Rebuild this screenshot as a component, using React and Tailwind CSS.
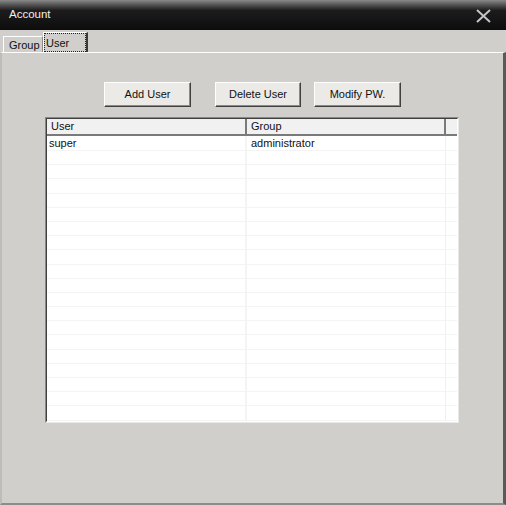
import React from "react";

const rows = Array.from({ length: 20 });

function Btn({ children, className = "" }) {
  return (
    <div
      className={
        "h-[25px] flex items-center justify-center bg-[#ebeae7] border border-t-white border-l-white border-r-[#404040] border-b-[#404040] shadow-[inset_-1px_-1px_0_#8a8a8a] text-[#111] " +
        className
      }
    >
      {children}
    </div>
  );
}

export default function App() {
  return (
    <div
      className="w-[506px] h-[505px] bg-[#d0cfcc] flex flex-col text-[11px] leading-none text-[#111] overflow-hidden"
      style={{ fontFamily: '"Liberation Sans", Arial, sans-serif' }}
    >
      {/* title bar */}
      <div className="h-[30px] shrink-0 flex items-center justify-between pl-[9px] pr-[15px] bg-linear-to-b from-[#8a8a8a] via-[#1c1c1c] via-[35%] to-[#0d0d0d]">
        <span className="text-[#f0f0f0] text-[11.5px] -mt-[1px]">Account</span>
        <svg width="15" height="14" viewBox="0 0 15 14" className="mt-[2px]">
          <path d="M1 1 L14 13 M14 1 L1 13" stroke="#c4c4c4" strokeWidth="2" fill="none" />
        </svg>
      </div>

      {/* tab strip */}
      <div className="h-[22px] shrink-0 flex items-end pl-[3px]">
        <div className="w-[40px] h-[16px] border-l border-t border-white border-r border-r-[#8a8a8a] flex items-center pl-[5px] pt-[2px]">
          Group
        </div>
        <div className="w-[45px] h-[20px] border-l border-t border-white border-r-2 border-r-[#3a3a3a] flex">
          <div className="flex-1 border border-dotted border-[#222] pl-[1px] pt-[4px]">User</div>
        </div>
      </div>

      {/* body */}
      <div className="flex-1 flex flex-col border-t border-t-white border-r-[3px] border-r-[#5a5a5a] border-b-2 border-b-[#8c8c8c] border-l-2 border-l-[#bdbcb8]">
        <div className="flex mt-[29px] pl-[102px]">
          <Btn className="w-[87px]">Add User</Btn>
          <Btn className="w-[86px] ml-[24px]">Delete User</Btn>
          <Btn className="w-[87px] ml-[13px]">Modify PW.</Btn>
        </div>

        {/* list */}
        <div className="ml-[43px] mt-[10px] w-[414px] h-[306px] border border-t-[#888] border-l-[#888] border-r-[#e8e8e8] border-b-[#e8e8e8] flex">
          <div className="flex-1 flex flex-col border border-t-[#404040] border-l-[#404040] border-r-white border-b-white bg-white overflow-hidden">
            {/* header */}
            <div className="h-[17px] shrink-0 flex bg-[#f1f1f1] border-b-2 border-b-[#7a7a7a]">
              <div className="w-[200px] pl-[4px] flex items-center border-r-2 border-r-[#7a7a7a]">User</div>
              <div className="w-[199px] pl-[4px] flex items-center border-r-2 border-r-[#7a7a7a]">Group</div>
              <div className="flex-1" />
            </div>
            {/* rows */}
            <div className="flex-1">
              {rows.map((_, i) => (
                <div
                  key={i}
                  className={
                    "flex border-b border-b-[#f4f4f4] " + (i === 0 ? "h-[15px]" : "h-[14.2px]")
                  }
                >
                  <div className="w-[200px] pl-[2px] flex items-center border-r-2 border-r-[#f4f4f4]">
                    {i === 0 ? "super" : ""}
                  </div>
                  <div className="w-[199px] pl-[4px] flex items-center border-r border-r-[#f0f0f0]">
                    {i === 0 ? "administrator" : ""}
                  </div>
                  <div className="flex-1" />
                </div>
              ))}
            </div>
          </div>
        </div>
      </div>
    </div>
  );
}
